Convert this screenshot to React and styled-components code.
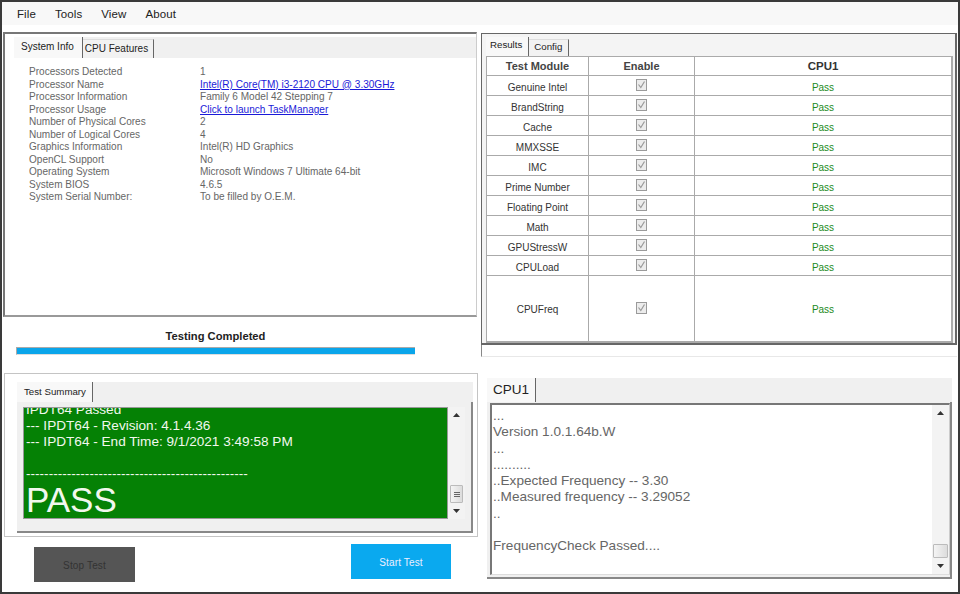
import React from "react";
import styled, { createGlobalStyle } from "styled-components";

const Global = createGlobalStyle`
  html, body { margin: 0; padding: 0; background: #fff; }
  * { box-sizing: border-box; }
  body { font-family: "Liberation Sans", Arial, sans-serif; }
`;

const Win = styled.div`
  width: 960px; height: 594px; background: #fff; overflow: hidden;
  border: 2px solid #3a3a3a;
  display: flex; flex-direction: column;
`;
const MenuBar = styled.div`
  height: 23px; background: #f8f8f8; display: flex; align-items: center;
  padding: 1px 0 0 15px; gap: 19px; font-size: 11.5px; color: #222; letter-spacing: .1px; flex: none;
`;
const Body = styled.div`
  flex: 1; display: grid; grid-template-columns: 477px 1fr; min-height: 0;
`;
const LeftCol = styled.div`display: flex; flex-direction: column; min-width: 0;`;
const RightCol = styled.div`display: flex; flex-direction: column; min-width: 0;`;

const SysPanel = styled.div`
  margin: 7px 0 0 1px; height: 285px; background: #fff;
  border: 2px solid #777; border-right: 1px solid #ccc; border-bottom-color: #999;
  padding: 3px 0 0 9px; display: flex; flex-direction: column; width: 474px;
`;
const TabStrip = styled.div`
  flex: none; display: flex; align-items: flex-end; background: ${p => p.$bg || "#f0f0f0"};
  height: ${p => p.$h}px;
`;
const Tab = styled.div`
  height: ${p => p.$active ? p.$h : p.$h - 2}px;
  padding: 0 ${p => p.$px || 4}px ${p => p.$pb || 0}px ${p => p.$pl || 5}px;
  font-size: ${p => p.$fs || 10}px; color: #222; display: flex; align-items: center;
  border-right: 1.5px solid #666; white-space: nowrap;
  background: ${p => p.$active ? "#f8f8f8" : "#f2f2f2"};
  ${p => !p.$active && "border-top: 1px solid #ddd;"}
`;
const InfoBody = styled.div`
  flex: 1; background: #fff; margin-left: 3px; margin-right: 1px; padding: 8px 0 0 12px;
`;
const InfoGrid = styled.div`
  display: grid; grid-template-columns: 171px 1fr; grid-auto-rows: 12.5px;
  font-size: 10.05px; line-height: 12.5px; color: #666;
`;
const Link = styled.span`color: #1a1ad8; text-decoration: underline;`;

const Status = styled.div`
  flex: none; margin-top: 13px; width: 399px; margin-left: 14px;
  display: flex; flex-direction: column; align-items: center;
`;
const StatusText = styled.div`font-size: 11.2px; font-weight: bold; color: #222; line-height: 13px; height: 14px;`;
const Bar = styled.div`
  width: 100%; height: 8px; margin-top: 3px; background: #0aa5ea;
  border: 1px solid #ddd; border-top-color: #aaa; border-left-color: #aaa; border-right: 0;
`;

const SummaryGroup = styled.div`
  margin: 18px 0 0 2px; width: 474px; height: 164px; border: 1px solid #c4c4c4;
  padding: 8px 4px 3px 12px; display: flex; flex-direction: column; flex: none;
`;
const SummaryFrame = styled.div`
  flex: 1; background: #f0f0f0; border-right: 2px solid #888; border-bottom: 2px solid #888;
  padding: 5px 6px 12px 6px; display: flex; min-height: 0;
`;
const GreenBox = styled.div`
  flex: 1; background: #058105; color: #f2f8ee; overflow: hidden; min-width: 0;
  display: flex; flex-direction: column; justify-content: flex-end;
  border: 1px solid #999; padding: 0 0 0 2px;
`;
const GreenLine = styled.div`
  font-size: 13.6px; line-height: 16px; height: 16px; white-space: nowrap; flex: none;
`;
const PassText = styled.div`font-size: 35px; line-height: 36px; height: 36px; flex: none;`;

const Scroll = styled.div`
  width: ${p => p.$w}px; flex: none; background: #f3f3f3; display: flex; flex-direction: column;
  align-items: center; justify-content: space-between; padding: 6px 0 6px;
`;
const ScrollEnd = styled.div`display: flex; flex-direction: column; align-items: center; gap: ${p => p.$gap}px;`;
const Thumb = styled.div`
  width: ${p => p.$w}px; height: ${p => p.$h}px; border: 1px solid #bbb; border-radius: 1px;
  background: linear-gradient(90deg, #f4f4f4, #dcdcdc);
  display: flex; flex-direction: column; align-items: center; justify-content: center; gap: 1px;
`;
const Grip = styled.div`width: 6px; height: 1px; background: #666;`;

const Buttons = styled.div`
  flex: 1; display: flex; align-items: flex-start; padding-left: 32px; min-height: 0;
`;
const StopBtn = styled.div`
  width: 101px; height: 35px; margin-top: 10px; padding-top: 2px; background: #555; color: #333; font-size: 10px;
  display: flex; align-items: center; justify-content: center; letter-spacing: .15px;
`;
const StartBtn = styled.div`
  width: 100px; height: 35px; margin-top: 7px; margin-left: 216px; padding-top: 2px; background: #0aa9ef; color: #eef; font-size: 10px;
  display: flex; align-items: center; justify-content: center; letter-spacing: .15px;
`;

const ResultsPanel = styled.div`
  margin: 8px 0 0 2px; height: 312px; border: 2px solid #666; border-top-width: 1px; border-left-width: 1px;
  background: #f4f4f4; padding: 3px 2px 0 4px; display: flex; flex-direction: column; width: 476px; flex: none;
`;
const Table = styled.div`
  flex: none; width: 467px; display: grid; grid-template-columns: 102px 106px 1fr;
  grid-template-rows: 19px repeat(10, 20px) 65px; background: #fff;
  border: 1px solid #aaa; border-bottom-width: 2px; border-right-width: 2px;
`;
const Cell = styled.div`
  display: flex; align-items: center; justify-content: center; font-size: ${p => p.$fs || 10}px; color: ${p => p.$c || "#333"};
  border-right: ${p => p.$last ? 0 : "1px solid #aaa"}; border-bottom: ${p => p.$end ? 0 : "1px solid #aaa"};
  font-weight: ${p => p.$b ? "bold" : "normal"}; padding-top: ${p => p.$pt ?? 1}px;
`;
const Rule = styled.div`
  margin-left: 2px; height: 12px; width: 476px; flex: none;
  border-left: 1px solid #888; border-bottom: 1px solid #e8e8e8;
`;

const LogTabs = styled.div`margin: 21px 0 0 8px; width: 465px; flex: none;`;
const LogFrame = styled.div`
  margin-left: 8px; width: 465px; height: 177px; background: #f0f0f0;
  border-right: 2px solid #888; border-bottom: 2px solid #888; padding: 1px 0 2px 3px; display: flex; flex: none;
`;
const LogBox = styled.div`
  flex: 1; background: #fff; border: 2px solid #777; border-right: 1px solid #ccc; border-bottom: 1px solid #ddd;
  display: flex; min-height: 0; padding-left: 1px;
`;
const LogText = styled.div`
  flex: 1; padding-top: 3px; font-size: 13.6px; line-height: 16.25px; color: #666; min-width: 0;
`;
const LogLine = styled.div`height: 16.25px; white-space: nowrap;`;

const Check = () => (
  <svg width="11" height="12" viewBox="0 0 11 12" style={{ marginTop: -3 }}>
    <rect x="0.5" y="0.5" width="10" height="11" fill="#ececec" stroke="#9a9a9a" />
    <path d="M2.5 5.5 L4.8 8.5 L8.5 2.5" fill="none" stroke="#9a9a9a" strokeWidth="1.2" />
  </svg>
);
const Arrow = ({ down }) => (
  <svg width="7" height="4" viewBox="0 0 7 4"><path d={down ? "M0 0H7L3.5 4Z" : "M0 4H7L3.5 0Z"} fill="#333" /></svg>
);

const info = [
  ["Processors Detected", "1"],
  ["Processor Name", "Intel(R) Core(TM) i3-2120 CPU @ 3.30GHz", true],
  ["Processor Information", "Family 6 Model 42 Stepping 7"],
  ["Processor Usage", "Click to launch TaskManager", true],
  ["Number of Physical Cores", "2"],
  ["Number of Logical Cores", "4"],
  ["Graphics Information", "Intel(R) HD Graphics"],
  ["OpenCL Support", "No"],
  ["Operating System", "Microsoft Windows 7 Ultimate 64-bit"],
  ["System BIOS", "4.6.5"],
  ["System Serial Number:", "To be filled by O.E.M."],
];
const modules = ["Genuine Intel", "BrandString", "Cache", "MMXSSE", "IMC", "Prime Number", "Floating Point", "Math", "GPUStressW", "CPULoad", "CPUFreq"];
const log = ["...", "Version 1.0.1.64b.W", "...", "..........", "..Expected Frequency -- 3.30", "..Measured frequency -- 3.29052", "..", "", "FrequencyCheck Passed...."];

export default function App() {
  return (
    <Win>
      <Global />
      <MenuBar><span>File</span><span>Tools</span><span>View</span><span>About</span></MenuBar>
      <Body>
        <LeftCol>
          <SysPanel>
            <TabStrip $h={21}>
              <Tab $active $h={21} $pl={7} $px={8} $pb={2}>System Info</Tab>
              <Tab $h={21} $pl={2} $px={5} $pb={1}>CPU Features</Tab>
            </TabStrip>
            <InfoBody>
              <InfoGrid>
                {info.map(([k, v, l]) => (
                  <React.Fragment key={k}>
                    <span>{k}</span>
                    {l ? <Link>{v}</Link> : <span>{v}</span>}
                  </React.Fragment>
                ))}
              </InfoGrid>
            </InfoBody>
          </SysPanel>
          <Status>
            <StatusText>Testing Completed</StatusText>
            <Bar />
          </Status>
          <SummaryGroup>
            <TabStrip $h={20}>
              <Tab $active $h={20} $fs={9.7} $pl={7} $px={6} $pb={2}>Test Summary</Tab>
            </TabStrip>
            <SummaryFrame>
              <GreenBox>
                <GreenLine>IPDT64 Passed</GreenLine>
                <GreenLine>--- IPDT64 - Revision: 4.1.4.36</GreenLine>
                <GreenLine>--- IPDT64 - End Time: 9/1/2021 3:49:58 PM</GreenLine>
                <GreenLine />
                <GreenLine>-------------------------------------------------</GreenLine>
                <PassText>PASS</PassText>
              </GreenBox>
              <Scroll $w={17}>
                <Arrow />
                <ScrollEnd $gap={6}>
                  <Thumb $w={13} $h={18}><Grip /><Grip /><Grip /></Thumb>
                  <Arrow down />
                </ScrollEnd>
              </Scroll>
            </SummaryFrame>
          </SummaryGroup>
          <Buttons>
            <StopBtn>Stop Test</StopBtn>
            <StartBtn>Start Test</StartBtn>
          </Buttons>
        </LeftCol>
        <RightCol>
          <ResultsPanel>
            <TabStrip $h={19} $bg="transparent">
              <Tab $active $h={19} $fs={9.7} $pl={4} $px={6} $pb={4}>Results</Tab>
              <Tab $h={19} $fs={9.7} $pl={5} $px={6} $pb={3}>Config</Tab>
            </TabStrip>
            <Table>
              <Cell $b $fs={11} $c="#444" $pt={0}>Test Module</Cell>
              <Cell $b $fs={11} $c="#444" $pt={0}>Enable</Cell>
              <Cell $b $fs={11.5} $last $c="#333" $pt={0}>CPU1</Cell>
              {modules.map((m, i) => {
                const end = i === modules.length - 1;
                return (
                  <React.Fragment key={m}>
                    <Cell $end={end} $pt={end ? 1 : 3}>{m}</Cell>
                    <Cell $end={end}><Check /></Cell>
                    <Cell $end={end} $last $c="#1c8a1c" $pt={end ? 1 : 3}>Pass</Cell>
                  </React.Fragment>
                );
              })}
            </Table>
          </ResultsPanel>
          <Rule />
          <LogTabs>
            <TabStrip $h={24}>
              <Tab $active $h={24} $fs={13.5} $pl={6} $px={6} $pb={2}>CPU1</Tab>
            </TabStrip>
          </LogTabs>
          <LogFrame>
            <LogBox>
              <LogText>
                {log.map((l, i) => <LogLine key={i}>{l}</LogLine>)}
              </LogText>
              <Scroll $w={17}>
                <Arrow />
                <ScrollEnd $gap={6}>
                  <Thumb $w={15} $h={14} />
                  <Arrow down />
                </ScrollEnd>
              </Scroll>
            </LogBox>
          </LogFrame>
        </RightCol>
      </Body>
    </Win>
  );
}
